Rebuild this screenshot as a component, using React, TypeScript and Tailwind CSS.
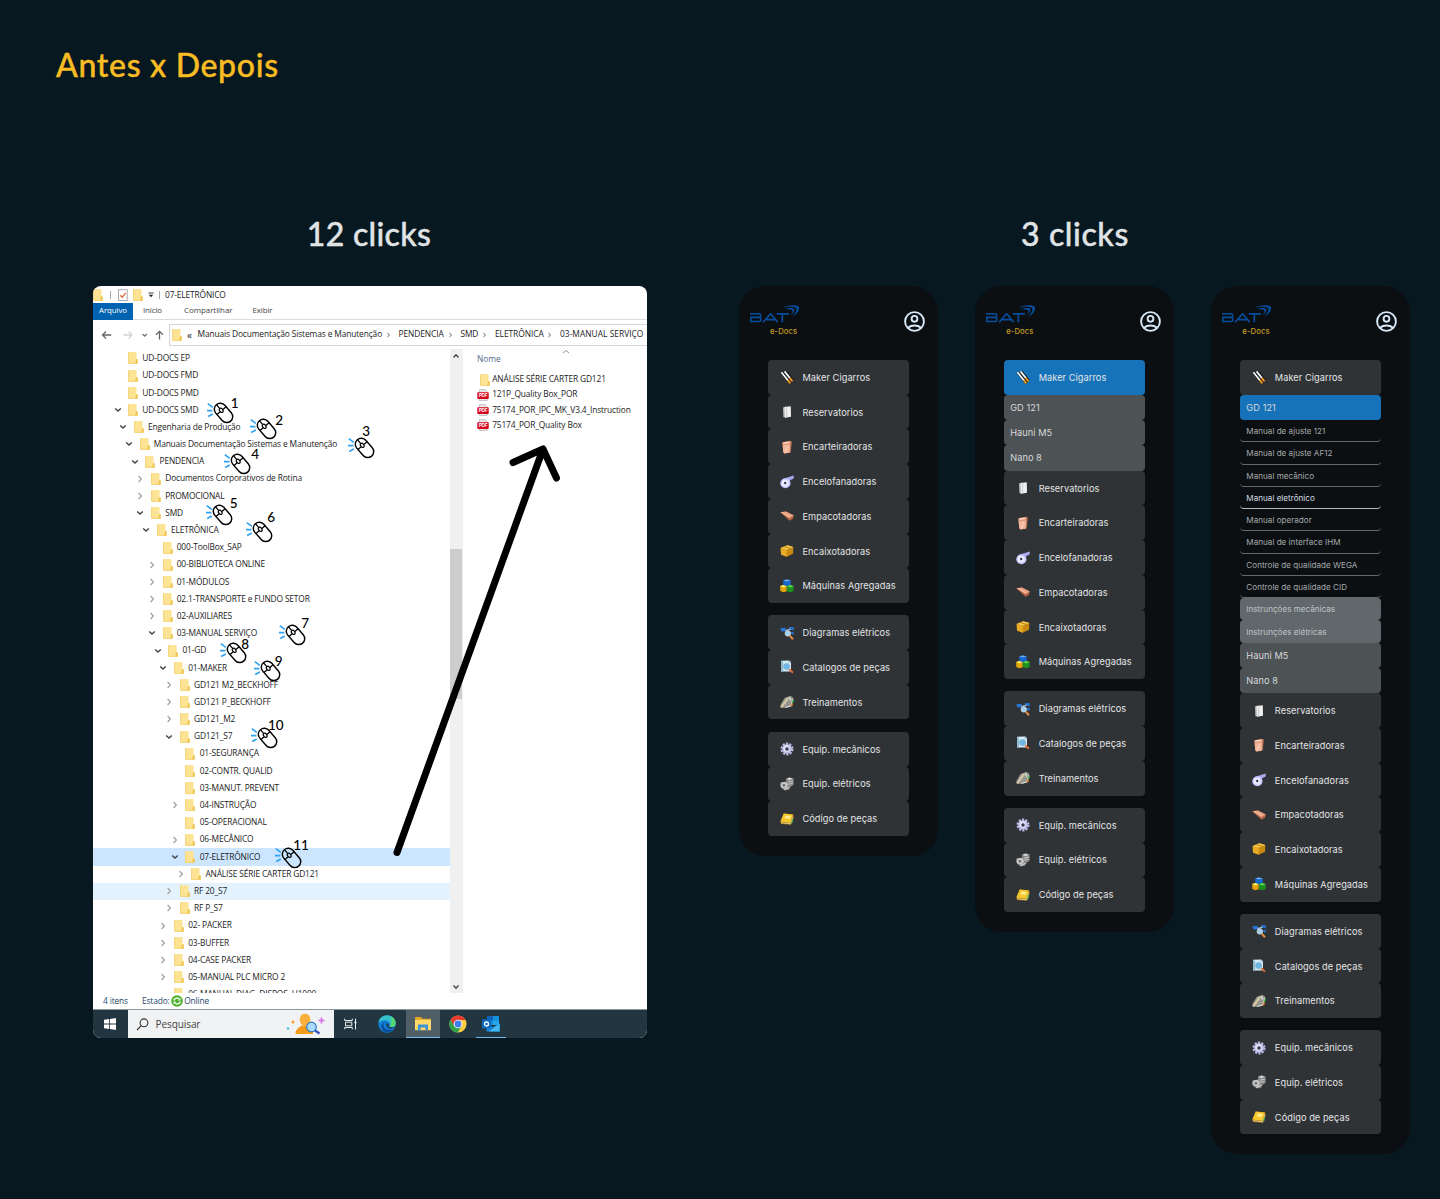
import React from "react";

type Row = { l: number; t: string; c?: "o" | "c"; bg?: string };

const rows: Row[] = [
  { l: 0, t: "UD-DOCS EP" },
  { l: 0, t: "UD-DOCS FMD" },
  { l: 0, t: "UD-DOCS PMD" },
  { l: 0, t: "UD-DOCS SMD", c: "o" },
  { l: 1, t: "Engenharia de Produção", c: "o" },
  { l: 2, t: "Manuais Documentação Sistemas e Manutenção", c: "o" },
  { l: 3, t: "PENDENCIA", c: "o" },
  { l: 4, t: "Documentos Corporativos de Rotina", c: "c" },
  { l: 4, t: "PROMOCIONAL", c: "c" },
  { l: 4, t: "SMD", c: "o" },
  { l: 5, t: "ELETRÔNICA", c: "o" },
  { l: 6, t: "000-ToolBox_SAP" },
  { l: 6, t: "00-BIBLIOTECA ONLINE", c: "c" },
  { l: 6, t: "01-MÓDULOS", c: "c" },
  { l: 6, t: "02.1-TRANSPORTE e FUNDO SETOR", c: "c" },
  { l: 6, t: "02-AUXILIARES", c: "c" },
  { l: 6, t: "03-MANUAL SERVIÇO", c: "o" },
  { l: 7, t: "01-GD", c: "o" },
  { l: 8, t: "01-MAKER", c: "o" },
  { l: 9, t: "GD121 M2_BECKHOFF", c: "c" },
  { l: 9, t: "GD121 P_BECKHOFF", c: "c" },
  { l: 9, t: "GD121_M2", c: "c" },
  { l: 9, t: "GD121_S7", c: "o" },
  { l: 10, t: "01-SEGURANÇA" },
  { l: 10, t: "02-CONTR. QUALID" },
  { l: 10, t: "03-MANUT. PREVENT" },
  { l: 10, t: "04-INSTRUÇÃO", c: "c" },
  { l: 10, t: "05-OPERACIONAL" },
  { l: 10, t: "06-MECÂNICO", c: "c" },
  { l: 10, t: "07-ELETRÔNICO", c: "o", bg: "bg-[#cce6ff]" },
  { l: 11, t: "ANÁLISE SÉRIE CARTER GD121", c: "c" },
  { l: 9, t: "RF 20_S7", c: "c", bg: "bg-[#e4f2fe]" },
  { l: 9, t: "RF P_S7", c: "c" },
  { l: 8, t: "02- PACKER", c: "c" },
  { l: 8, t: "03-BUFFER", c: "c" },
  { l: 8, t: "04-CASE PACKER", c: "c" },
  { l: 8, t: "05-MANUAL PLC MICRO 2", c: "c" },
  { l: 8, t: "06-MANUAL DIAG. DISPOS. H1000" },
];

function Folder() {
  return (
    <svg width="10" height="12" viewBox="0 0 10 12" className="shrink-0">
      <path d="M0.3 0.3H8.3V7L9.7 7.6V11.7H0.3Z" fill="#fbe08a" />
      <path d="M0.3 0.3H8.3V11.5H1Z" fill="#fde394" />
      <path d="M8 7.2H9.7V11.7H7.2Z" fill="#f0c652" />
      <path d="M0.6 0.3V11.4H8" stroke="#efc95f" strokeWidth="0.6" fill="none" />
    </svg>
  );
}

function Chevron({ open }: { open: boolean }) {
  return (
    <svg width="8" height="8" viewBox="0 0 8 8" fill="none" className="shrink-0">
      {open ? (
        <path d="M1.2 2.5L4 5.1L6.8 2.5" stroke="#444" strokeWidth="1.4" />
      ) : (
        <path d="M2.6 1L5.4 4L2.6 7" stroke="#a0a0a0" strokeWidth="1.2" />
      )}
    </svg>
  );
}

function Pdf() {
  return (
    <svg width="12" height="12" viewBox="0 0 12 12" className="shrink-0">
      <path d="M2.5 0.5H8L10.2 2.6V11.5H2.5Z" fill="#e8e8e8" stroke="#aaa" strokeWidth="0.6" />
      <rect x="0.3" y="3.2" width="11.4" height="6.8" rx="0.8" fill="#d8031c" />
      <text x="6" y="8.3" fontSize="4.6" fontWeight="700" textAnchor="middle" fill="#fff" fontFamily="Liberation Sans">PDF</text>
    </svg>
  );
}

const clicks: [string, number, number, number, number][] = [
  ["1", 206.5, 402.5, 234.5, 404],
  ["2", 249.7, 419, 279, 421.5],
  ["3", 348, 437.5, 366, 432.5],
  ["4", 223.5, 454, 255, 455.5],
  ["5", 206, 504.5, 233.5, 504],
  ["6", 246, 522, 271, 518.5],
  ["7", 279.3, 625, 305, 624],
  ["8", 220, 643, 245, 645],
  ["9", 253.5, 661, 278.7, 662],
  ["10", 251, 727.5, 275.8, 726],
  ["11", 275, 847.5, 301, 846],
];

function ClickMark({ d }: { d: [string, number, number, number, number] }) {
  const [n, x, y, nx, ny] = d;
  return (
    <>
      <svg className="absolute overflow-visible" style={{ left: x - 93, top: y - 286 }} width="26" height="21" viewBox="0 0 26 21" fill="none">
        <path d="M0.8 0.6L5.8 4.4M0 7.7H5.4M1.2 13.6L5.8 11" stroke="#2ea3f5" strokeWidth="1.7" />
        <g transform="translate(16.5 9.9) rotate(-41)" stroke="#000" strokeWidth="1.45">
          <rect x="-6" y="-10.9" width="12" height="21.8" rx="6" />
          <path d="M-6 -3H-1.8M1.8 -3H6M0 -10.9V-5.6" strokeWidth="1.3" />
          <ellipse cx="0" cy="-3.4" rx="1.6" ry="2.3" strokeWidth="1.2" />
        </g>
      </svg>
      <span
        className="absolute flex h-4 w-6 items-center justify-center font-['Lato'] text-[13.5px] leading-none font-medium text-black"
        style={{ left: nx - 93 - 12, top: ny - 286 - 8.5 }}
      >
        {n}
      </span>
    </>
  );
}

function Sep() {
  return (
    <svg width="5" height="6" viewBox="0 0 5 6" fill="none" className="shrink-0">
      <path d="M1.4 1L3.6 3L1.4 5" stroke="#555" strokeWidth="0.9" />
    </svg>
  );
}

function Explorer() {
  return (
    <section className="relative flex h-[752px] w-[553.6px] shrink-0 flex-col overflow-hidden rounded-[8px] bg-white font-['Open_Sans',sans-serif] text-[8.4px] tracking-[-0.15px] text-[#1c1c1c]">
      <div className="flex h-[17px] shrink-0 items-center">
        <Folder />
        <span className="ml-[6.5px] h-2 w-px bg-[#aaa]" />
        <svg width="10" height="12" viewBox="0 0 10 12" className="ml-[7px]" fill="none">
          <rect x="0.6" y="0.8" width="8.6" height="10.6" fill="#fff" stroke="#888" strokeWidth="0.7" />
          <path d="M2.3 6.3L4.2 8.3L7.7 3.8" stroke="#e2653b" strokeWidth="1.3" />
        </svg>
        <span className="ml-[5.5px] flex"><Folder /></span>
        <svg width="6" height="6" viewBox="0 0 6 6" className="ml-[5px]">
          <path d="M0.5 1H5.5" stroke="#222" strokeWidth="0.9" />
          <path d="M0.8 2.8H5.2L3 5.2Z" fill="#222" />
        </svg>
        <span className="ml-[5px] h-2 w-px bg-[#aaa]" />
        <span className="ml-[5px] pt-px">07-ELETRÔNICO</span>
      </div>
      <div className="flex h-[17px] shrink-0 items-center border-b border-[#dcdcdc] text-[7.9px] tracking-[-0.1px] text-[#444]">
        <span className="flex h-[17px] w-[40px] items-center justify-center bg-[#0063b1] text-white">Arquivo</span>
        <span className="ml-[10px] w-[41px]">Início</span>
        <span className="w-[68.5px] tracking-[-0.02px]">Compartilhar</span>
        <span>Exibir</span>
      </div>
      <div className="flex h-[29px] shrink-0 items-center">
        <svg width="76" height="12" viewBox="0 0 76 12" fill="none" className="shrink-0" strokeWidth="1.3">
          <path d="M18.2 6H9.5M13 2.5L9.5 6L13 9.5" stroke="#666" />
          <path d="M30.5 6H39M35.5 2.5L39 6L35.5 9.5" stroke="#d5d5d5" />
          <path d="M49.5 5L51.7 7L53.9 5" stroke="#777" />
          <path d="M66.5 10.5V2.5M63 5.8L66.5 2.3L70 5.8" stroke="#666" />
        </svg>
        <div className="flex h-[22px] flex-1 items-center border border-r-0 border-[#d5d5d5] pl-[2px] whitespace-nowrap">
          <Folder />
          <span className="ml-[5px] w-[10.5px] text-[10px] leading-[10px]">«</span>
          <span className="w-[188px] tracking-[-0.12px]">Manuais Documentação Sistemas e Manutenção</span>
          <Sep />
          <span className="ml-[8px] w-[49.5px] tracking-[-0.08px]">PENDENCIA</span>
          <Sep />
          <span className="ml-[7.5px] w-[21.5px]">SMD</span>
          <Sep />
          <span className="ml-[8px] w-[52px] tracking-[-0.05px]">ELETRÔNICA</span>
          <Sep />
          <span className="ml-[8px] tracking-[0.03px]">03-MANUAL SERVIÇO</span>
        </div>
      </div>
      <div className="flex h-[644px] shrink-0">
        <div className="w-[357px] overflow-hidden pt-[0.9px] whitespace-nowrap">
          {rows.map((r) => (
            <div key={r.t} className={"flex h-[17.19px] items-center " + (r.bg ?? "")} style={{ paddingLeft: 20.5 + r.l * 5.74 }}>
              <span className="flex w-[14.6px]">{r.c && <Chevron open={r.c === "o"} />}</span>
              <Folder />
              <span className="ml-[4.2px]">{r.t}</span>
            </div>
          ))}
        </div>
        <div className="flex w-[12px] flex-col items-center bg-[#f0f0f0]">
          <svg width="8" height="14" viewBox="0 0 8 14" fill="none"><path d="M1.5 8.5L4 5.8L6.5 8.5" stroke="#444" strokeWidth="1.4" /></svg>
          <div className="mt-[186px] h-[150px] w-full bg-[#cdcdcd]" />
          <svg width="8" height="14" viewBox="0 0 8 14" fill="none" className="mt-auto"><path d="M1.5 6.5L4 9.2L6.5 6.5" stroke="#444" strokeWidth="1.4" /></svg>
        </div>
        <div className="flex flex-1 flex-col border-l border-[#f0f0f0] pl-[14px] whitespace-nowrap">
          <svg width="8" height="5" viewBox="0 0 8 5" fill="none" className="ml-[84.5px]"><path d="M1 4L4 1.4L7 4" stroke="#888" strokeWidth="0.9" /></svg>
          <span className="h-[18px] leading-[10px] tracking-[0px] text-[#566a8c]">Nome</span>
          <div className="flex h-[15.2px] items-center"><span className="flex w-[15.2px] justify-center"><Folder /></span>ANÁLISE SÉRIE CARTER GD121</div>
          <div className="flex h-[15.2px] items-center"><span className="flex w-[15.2px]"><Pdf /></span>121P_Quality Box_POR</div>
          <div className="flex h-[15.2px] items-center"><span className="flex w-[15.2px]"><Pdf /></span>75174_POR_IPC_MK_V3.4_Instruction</div>
          <div className="flex h-[15.2px] items-center"><span className="flex w-[15.2px]"><Pdf /></span>75174_POR_Quality Box</div>
        </div>
      </div>
      <div className="flex h-[16px] shrink-0 items-center pl-[10px] text-[#24476c]">
        <span className="w-[39px]">4 itens</span>
        <span>Estado:</span>
        <svg width="12" height="12" viewBox="0 0 12 12" fill="none" className="mx-[1.3px]">
          <circle cx="6" cy="6" r="5.8" fill="#4caf2a" />
          <path d="M2.6 5.6C3.5 2.8 6.5 2.4 8.3 4.2M9.4 6.4C8.5 9.2 5.5 9.6 3.7 7.8" stroke="#e9f8df" strokeWidth="1.5" />
          <path d="M9.6 2.7V5.6H6.8ZM2.4 9.4V6.5H5.2Z" fill="#e9f8df" />
        </svg>
        <span>Online</span>
      </div>
      <div className="flex flex-1 items-stretch border-t border-[#8c979b] bg-[#213640]">
        <div className="flex w-[34.5px] items-center justify-center">
          <svg width="12" height="12" viewBox="0 0 12 12" fill="#fff"><path d="M0 1.7L5.2 1V5.6H0ZM6 .9L12 0V5.6H6ZM0 6.4H5.2V11L0 10.3ZM6 6.4H12V12L6 11.1Z" /></svg>
        </div>
        <div className="flex w-[206px] items-center bg-[#f1f2f3] text-[10px] tracking-[-0.08px] text-[#444]">
          <svg width="13" height="13" viewBox="0 0 13 13" fill="none" stroke="#333" strokeWidth="1.1" className="ml-[8px]"><circle cx="8" cy="4.8" r="3.9" /><path d="M5.2 7.7L1 12" /></svg>
          <span className="ml-[7px]">Pesquisar</span>
          <svg width="40" height="22" viewBox="0 0 40 22" className="mr-[8.5px] ml-auto">
            <circle cx="3" cy="15.5" r="1.3" fill="#42c6d9" /><circle cx="8" cy="9" r="1.5" fill="#f6a623" />
            <path d="M10.5 21C10.5 16 14 14.5 16.5 12.5H24L28 16V21Z" fill="#f59b1c" />
            <path d="M14.8 6.5C14.8 3 17 .8 20 .8S25.3 3 25.3 6.5S23 13 20 13S14.8 10 14.8 6.5Z" fill="#fbb03b" />
            <circle cx="26.5" cy="14" r="4.8" fill="#a9dcf8" stroke="#2f78c4" strokeWidth="1.2" />
            <path d="M30 17.5L34.5 20.5" stroke="#3355c0" strokeWidth="2.4" />
            <path d="M36.5 4.5V10.5M33.5 7.5H39.5" stroke="#d56ce0" strokeWidth="1.7" />
          </svg>
        </div>
        <div className="flex w-[34px] items-center justify-center">
          <svg width="13" height="12" viewBox="0 0 13 12" fill="none" stroke="#e8edf0" strokeWidth="1"><path d="M.7 .6V2.5H8.3V.6M.7 11.2V9.5H8.3V11.2M1.5 4.2H7.8V7.8H1.5ZM11.5 .5V11.5" /><circle cx="11.5" cy="4.5" r="1.1" fill="#fff" stroke="none" /></svg>
        </div>
        <div className="flex w-[38px] items-center justify-center">
          <svg width="18" height="18" viewBox="0 0 18 18">
            <circle cx="9" cy="9" r="8.7" fill="#1380d8" />
            <path d="M.5 8C1 3 5 .3 9 .3C14 .3 17.7 4 17.7 8.2C17.7 11.5 14.5 12.5 12 11.8C13 7.8 10 5.3 6.8 5.3C3.5 5.3 1 7 .5 8Z" fill="#35c1c9" />
            <path d="M13 1.3C16 2.8 17.7 5.4 17.7 8.2C17.7 11.5 14.5 12.5 12 11.8C13.3 8.5 14 5 13 1.3Z" fill="#55d66f" />
            <path d="M5.5 9.5C5.2 13.5 9 16 16 14.3C13 18 5 19 3.2 12.5C3 9.5 5 7 8 7C6.5 7.5 5.5 8.5 5.5 9.5Z" fill="#0c4f9e" />
            <path d="M8.5 8.5C9.5 8 10.9 8.6 10.6 10C9.9 11.6 11 12.8 16.8 12.3C12 15.3 7.5 12.5 8.5 8.5Z" fill="#213640" />
          </svg>
        </div>
        <div className="flex w-[34px] items-center justify-center border-b border-[#76b9ed] bg-[#505f67]">
          <svg width="16" height="14" viewBox="0 0 16 14"><path d="M0 0H6L7.5 1.8H16V13H0Z" fill="#e3a51e" /><rect x="0" y="2.8" width="16" height="10.4" fill="#ffd867" /><path d="M3 13.2V7.5H13V13.2H10.5V10.5H5.5V13.2Z" fill="#3b93d9" /></svg>
        </div>
        <div className="flex w-[36px] items-center justify-center">
          <svg width="18" height="18" viewBox="0 0 18 18">
            <circle cx="9" cy="9" r="8.6" fill="#ffce44" />
            <path d="M1.5 4.8A8.6 8.6 0 0 1 16.6 5H9L5 11Z" fill="#e53a2f" />
            <path d="M1.5 4.8A8.6 8.6 0 0 0 8.7 17.6L12.5 11H5.2Z" fill="#2fa24d" />
            <circle cx="9" cy="9" r="4.3" fill="#fff" /><circle cx="9" cy="9" r="3.4" fill="#3f7df0" />
          </svg>
        </div>
        <div className="flex w-[30px] items-center justify-center border-b border-[#76b9ed]">
          <svg width="18" height="16" viewBox="0 0 18 16"><rect x="5" y="0" width="12" height="9" fill="#1490df" /><path d="M5 0H11V4.5H5Z" fill="#0f65b8" /><path d="M11 4.5H17V9H11Z" fill="#28a8ea" /><path d="M4.5 8L11 11L17.7 7.5V15.5H4.5Z" fill="#1a86d8" /><path d="M17.7 7.5V15.5H7Z" fill="#40b8f1" /><rect x="0" y="3.5" width="9" height="9" rx=".7" fill="#0a6cc4" /><circle cx="4.5" cy="8" r="2" fill="none" stroke="#fff" strokeWidth="1.3" /></svg>
        </div>
      </div>
      {clicks.map((c) => <ClickMark key={c[0]} d={c} />)}
      <svg className="absolute top-0 left-0" width="554" height="752" viewBox="93 286 554 752" fill="none">
        <path d="M397 852.5L543 449M513 462.5L543 449L556.5 478" stroke="#000" strokeWidth="7" strokeLinecap="round" strokeLinejoin="round" />
      </svg>
    </section>
  );
}

const icons: Record<string, React.ReactNode> = {
  "Maker Cigarros": (
    <>
      <path d="M1.7 2.4L10.6 13.2M5 1.4L12.6 11" stroke="#17191a" strokeWidth="3" />
      <path d="M1.4 2.3L8 10.5M4.6 1.4L9.8 8" stroke="#fff" strokeWidth="1.7" />
      <path d="M7.8 10.2L10.3 13.3M9.7 7.9L12.5 11.3" stroke="#ec981c" strokeWidth="2" />
    </>
  ),
  Reservatorios: (
    <>
      <path d="M3 2.5L6.3 1.5V12.5L3.4 12.2Z" fill="#b9b9b9" />
      <path d="M4.5 2L10.8 1.2L11 11.8L5 12.8Z" fill="#efefef" />
      <path d="M6.6 1.7V12.5" stroke="#bcbcbc" strokeWidth=".7" />
    </>
  ),
  Encarteiradoras: (
    <>
      <path d="M2.5 2.2L9.5 .8L11.8 1.6L10.6 12.4L4.2 13.6L3.2 12Z" fill="#c97d5e" />
      <path d="M2.5 2.2L9.8 1.5L9.6 12.8L4.2 13.6L3.2 12Z" fill="#f2b69b" />
      <path d="M2.6 4.8L10.8 3.8" stroke="#cf8568" strokeWidth=".7" />
      <path d="M4 2.8L8.6 2.4" stroke="#ffdccb" />
      <path d="M5 12L8.5 6" stroke="#f9cfbb" strokeWidth="1.2" />
    </>
  ),
  Encelofanadoras: (
    <>
      <path d="M4 3.5L13.7 .4V3.4L10.2 5.2L9 8Z" fill="#a9a9ee" />
      <ellipse cx="5.4" cy="8.3" rx="5.1" ry="5" fill="#c7c6ff" />
      <ellipse cx="5.2" cy="8.2" rx="3.5" ry="3.4" fill="#ebebff" />
      <circle cx="5.2" cy="8" r="1.2" fill="#383b5a" />
    </>
  ),
  Empacotadoras: (
    <>
      <path d="M.3 3.3L6 2.4L13.8 6.4L13 9.7L9.5 11.8Z" fill="#b66244" />
      <path d="M.3 3.3L6 2.4L13.8 6.4L9.4 9.2Z" fill="#e9a382" />
      <path d="M2.5 3.6L10 8" stroke="#f4c6ad" strokeWidth=".8" />
    </>
  ),
  Encaixotadoras: (
    <>
      <path d="M.7 4L7.4 1.2L13.3 3L13 9.8L6.7 12.8L1 10.5Z" fill="#c98a12" />
      <path d="M.7 4L7.4 1.2L13.3 3L6.7 5.8Z" fill="#f5c94e" />
      <path d="M.7 4L6.7 5.8V12.8L1 10.5Z" fill="#e8ab25" />
      <path d="M3.8 2.5L10 4.2V6" stroke="#b07a14" strokeWidth=".9" fill="none" />
    </>
  ),
  "Máquinas Agregadas": (
    <>
      <path d="M3.2 1.6L6.5 .4L10.8 1.2V6L7 7.2L3.2 6.2Z" fill="#1766cc" /><path d="M3.2 1.6L6.5 .4L10.8 1.2L7 2.6Z" fill="#6fb0f4" />
      <path d="M.2 7.1L3.3 6.1L6.7 7.2V12.2L3.5 13.3L.2 12Z" fill="#e2a407" /><path d="M.2 7.1L3.3 6.1L6.7 7.2L3.5 8.6Z" fill="#ffeb6b" />
      <path d="M6.9 7.2L10 6.1L13.7 7V11.9L10.4 13.3L6.9 12.2Z" fill="#1c911f" /><path d="M6.9 7.2L10 6.1L13.7 7L10.4 8.5Z" fill="#61d849" />
    </>
  ),
  "Diagramas elétricos": (
    <>
      <path d="M.3 2.2L5.5 1.7L6.2 5.2L1.5 5.6ZM9 .9L13.7 1.3V4.2L9.6 3.4ZM9.8 6.6L13.7 5.7V8.9Z" fill="#2676d8" />
      <path d="M5.5 4.8L10.5 3.1" stroke="#9fb7cc" strokeWidth="1.5" />
      <circle cx="7.8" cy="7.4" r="2.7" fill="#9fd2f1" stroke="#c5ced4" strokeWidth="1" />
      <path d="M9.8 9.8L13 13.2" stroke="#df8a45" strokeWidth="2.1" />
    </>
  ),
  "Catalogos de peças": (
    <>
      <path d="M1 .8L8.8 .4L11 2V11.5H1Z" fill="#d6edf7" />
      <path d="M1 .8L3.2 2V11.5H1Z" fill="#8dbbd4" />
      <path d="M8.8 .4V2.6H11" stroke="#92b4c7" fill="none" strokeWidth=".7" />
      <circle cx="6.6" cy="6.6" r="3" fill="#69b9ec" stroke="#87abc2" strokeWidth=".9" />
      <path d="M9.2 9.3L13 12.7" stroke="#dd6b38" strokeWidth="1.9" />
    </>
  ),
  Treinamentos: (
    <>
      <path d="M4.5 3L10.5 .8L13.5 3L11.4 11.6L6 13L.5 12.6V10Z" fill="#969690" />
      <path d="M5.5 12.4L11 10.8L12.8 4" stroke="#e9e9df" strokeWidth=".9" fill="none" />
      <path d="M13.2 5L12.4 8" stroke="#4ab849" strokeWidth="1.4" />
      <path d="M12.4 8.5L11.6 11.2" stroke="#e2731f" strokeWidth="1.4" />
      <path d="M1.2 12.3L8 3" stroke="#d6c6a2" strokeWidth="2.2" /><path d="M9 2.2L11 5.5" stroke="#d8d8d4" strokeWidth="1.6" />
    </>
  ),
  "Equip. mecânicos": (
    <>
      <circle cx="7" cy="7" r="5.2" stroke="#b9b9e2" strokeWidth="2.6" strokeDasharray="2 1.27" fill="none" />
      <circle cx="7" cy="7" r="4.8" fill="#bcbce8" /><circle cx="6.6" cy="6.5" r="3.4" fill="#dedef6" />
      <circle cx="7" cy="7" r="1.7" fill="#34364b" />
    </>
  ),
  "Equip. elétricos": (
    <>
      <path d="M6 1.5L9.5 .3L13.6 1.6V7.8L10.5 10L9 12.8L5 13.4L2.5 12L.4 9.6V5.4L6 4.4Z" fill="#868686" />
      <path d="M6.5 1.7L10 .8L12.6 1.8L9.4 3.2Z" fill="#d9d9d9" />
      <ellipse cx="4.2" cy="8.2" rx="3.6" ry="3.1" fill="#c6c6c6" /><circle cx="3.9" cy="8.3" r="1.3" fill="#6b6b6b" />
      <path d="M8 5.1L13 4.2M8.3 7.2L12.6 6.4" stroke="#cfcfcf" strokeWidth=".9" />
      <path d="M4 12.6L9.6 10.4" stroke="#ddd" />
    </>
  ),
  "Código de peças": (
    <>
      <path d="M3.7 1.5L13 2.6L13.6 4.3L11 12.8L1 12L.4 9.4Z" fill="#ad7810" />
      <path d="M3.7 1.5L13 2.6L10.4 10.7L.4 9.4Z" fill="#f3c72d" />
      <path d="M5.5 3.4L10.8 4.1L9.9 6.9L4.5 6.3Z" fill="#ffe988" />
      <path d="M1 10.7L10.7 11.8L13.1 5" stroke="#f7f0c7" strokeWidth=".7" fill="none" />
      <path d="M12.8 7.2L11.7 11" stroke="#4caf4d" strokeWidth="1.2" />
    </>
  ),
};

function Item({ t, on }: { t: string; on?: boolean }) {
  return (
    <div className={"flex h-[34.73px] items-center rounded-[4px] pl-[12px] text-[#e3e5e6] " + (on ? "bg-[#1673b9]" : "bg-[#303336]")}>
      <svg width="14" height="14" viewBox="0 0 14 14" fill="none" className="mr-[8.5px] shrink-0">{icons[t]}</svg>
      <span className="pt-[1px]">{t}</span>
    </div>
  );
}

function Sub({ t, on }: { t: string; on?: boolean }) {
  return (
    <div className={"flex h-[25.35px] items-center rounded-[4px] pt-[0.6px] pl-[6px] text-[#d6d8d9] " + (on ? "bg-[#1673b9]" : "bg-[#4d5255]")}>{t}</div>
  );
}

const manuals = ["Manual de ajuste 121", "Manual de ajuste AF12", "Manual mecânico", "Manual eletrônico", "Manual operador", "Manual de interface IHM", "Controle de qualidade WEGA", "Controle de qualidade CID"];

function Phone({ mode }: { mode: 0 | 1 | 2 }) {
  return (
    <section className="flex w-[199px] flex-col rounded-[26px] bg-[#0b0f11] pb-[20px] font-['Inter',sans-serif] text-[9.2px] tracking-[0.07px]">
      <header className="flex h-[74px] items-start justify-between pt-[19px] pr-[13px] pl-[11px]">
        <div className="flex flex-col">
          <svg width="50" height="19" viewBox="0 0 50 19" fill="none">
            <path d="M0 8.8H9.4Q10.6 8.8 10.6 10.2V10.9Q10.6 12.4 9.4 12.4H0.8V16.5H9.4Q10.8 16.5 10.8 15V13.8Q10.8 12.4 9.4 12.4" stroke="#064d9d" strokeWidth="1.6" />
            <path d="M13.2 17.2L20.2 9Q20.6 8.6 21 9L27.6 17.2M16.5 14.7H25M26.8 8.8H39M32.3 8.8V17.3" stroke="#064d9d" strokeWidth="1.7" />
            <path d="M32 3C38 -.2 45 -.3 48.6 1.6C50.4 5 47 9.5 42 11.8C45.8 8.3 47.4 4.8 46 3C42 1.2 37 1.8 32 3Z" fill="#064d9d" />
            <path d="M34.5 4.4C39 2.8 42.5 2.8 44.2 3.8C45 6.2 43.3 8.2 40.6 9.9C42.6 7.4 43 6 42 5C40 4 37.4 4 34.5 4.4Z" fill="#064d9d" />
          </svg>
          <span className="mt-[3px] ml-[20px] text-[7.7px] leading-[10px] font-medium text-[#c69a24]">e-Docs</span>
        </div>
        <svg width="21" height="21" viewBox="0 0 21 21" fill="none" stroke="#d8eafa" strokeWidth="1.9" className="mt-[6px]">
          <circle cx="10.5" cy="10.5" r="9.4" /><circle cx="10.5" cy="7.8" r="2.9" />
          <path d="M4 16.7C7.5 13.7 13.5 13.7 17 16.7" />
        </svg>
      </header>
      <div className="ml-[29px] flex w-[141px] flex-col gap-[12.3px]">
        <div className="flex flex-col">
          <Item t="Maker Cigarros" on={mode === 1} />
          {mode > 0 && <Sub t="GD 121" on={mode === 2} />}
          {mode === 2 && manuals.map((m) => (
            <div key={m} className={"flex h-[22.25px] items-center rounded-b-[4px] border-b-[1.5px] pt-[1px] pl-[6px] text-[8.1px] tracking-[0.01px] " + (m === "Manual eletrônico" ? "border-[#b4babd] text-[#d5dde2]" : "border-[#62696d] text-[#a5a9ab]")}>{m}</div>
          ))}
          {mode === 2 && ["Instrunções mecânicas", "Instrunções elétricas"].map((m) => (
            <div key={m} className="flex h-[22.25px] items-center rounded-[4px] bg-[#60686b] pt-[0.5px] pl-[6px] text-[8.1px] tracking-[0.01px] text-[#bfc4c6]">{m}</div>
          ))}
          {mode > 0 && <Sub t="Hauni M5" />}
          {mode > 0 && <Sub t="Nano 8" />}
          {["Reservatorios", "Encarteiradoras", "Encelofanadoras", "Empacotadoras", "Encaixotadoras", "Máquinas Agregadas"].map((t) => <Item key={t} t={t} />)}
        </div>
        <div className="flex flex-col">
          {["Diagramas elétricos", "Catalogos de peças", "Treinamentos"].map((t) => <Item key={t} t={t} />)}
        </div>
        <div className="flex flex-col">
          {["Equip. mecânicos", "Equip. elétricos", "Código de peças"].map((t) => <Item key={t} t={t} />)}
        </div>
      </div>
    </section>
  );
}

export default function App() {
  return (
    <main className="h-[1199px] w-[1440px] overflow-hidden bg-[#071820]">
      <h1 className="h-[214px] pt-[45px] pl-[56px] font-['Lato'] text-[32px] leading-[40px] font-medium tracking-[0.7px] text-[#f9bc22] [-webkit-text-stroke:0.4px_#f9bc22]">Antes x Depois</h1>
      <div className="flex h-[72px] font-['Lato'] text-[32px] leading-[40px] font-medium text-[#e0e4e6] [-webkit-text-stroke:0.4px_#e0e4e6]">
        <h2 className="ml-[93px] w-[552px] text-center tracking-[0.3px]">12 clicks</h2>
        <h2 className="ml-[94px] w-[672px] text-center tracking-[0.6px]">3 clicks</h2>
      </div>
      <div className="flex items-start pl-[93px]">
        <Explorer />
        <div className="ml-[92.4px] flex items-start gap-[37.2px]">
          <Phone mode={0} />
          <Phone mode={1} />
          <Phone mode={2} />
        </div>
      </div>
    </main>
  );
}
